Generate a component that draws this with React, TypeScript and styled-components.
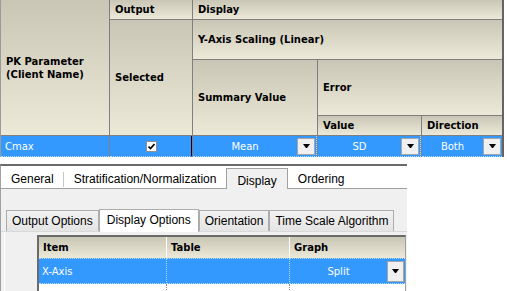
import styled, { createGlobalStyle } from "styled-components";

const GlobalStyle = createGlobalStyle`
  body {
    margin: 0;
    background: #ffffff;
  }
`;

const Page = styled.div`
  width: 507px;
  height: 291px;
  overflow: hidden;
  background: #ffffff;
`;

/* ---------- top grid ---------- */

const Grid = styled.div`
  display: grid;
  grid-template-columns: 108px 82px 124px 103px 80px;
  grid-template-rows: 19px 39px 55px 19px 21px;
  gap: 1px;
  width: fit-content;
  background: #7f7f7f;
  border-left: 1px solid #9a9a9a;
  border-right: 2px solid #646464;
  font-family: "DejaVu Sans", Verdana, sans-serif;
  font-size: 10px;
`;

const HeadCell = styled.div<{ $col: string; $row: string }>`
  grid-column: ${(p) => p.$col};
  grid-row: ${(p) => p.$row};
  display: flex;
  align-items: center;
  padding-left: 5px;
  background: linear-gradient(#cac6b6, #ece9d8);
  font-weight: bold;
  color: #000;
  line-height: 13px;
`;

const DataCell = styled.div<{ $divider?: boolean; $center?: boolean }>`
  display: flex;
  align-items: center;
  justify-content: ${(p) => (p.$center ? "center" : "flex-start")};
  padding-left: ${(p) => (p.$center ? "0" : "4px")};
  background: #3399ff;
  color: #ffffff;
  border-bottom: 1px dotted #b9dcff;
  ${(p) => p.$divider && "border-right: 1px solid #000;"}
`;

const Check = styled.span`
  width: 11px;
  height: 11px;
  box-sizing: border-box;
  border: 1px solid #8e8f8f;
  background: #ffffff;
  display: flex;
  align-items: center;
  justify-content: center;
  margin-left: 2px;
`;

const Combo = styled.div<{ $inner?: boolean }>`
  display: flex;
  align-items: center;
  background: #3399ff;
  color: #ffffff;
  padding-right: 1px;
  border-bottom: 1px dotted #b9dcff;
  border-right: ${(p) => (p.$inner ? "1px dotted #b9dcff" : "none")};
`;

const ComboText = styled.span`
  flex: 1;
  text-align: center;
`;

const DropButton = styled.span<{ $w: number; $h: number }>`
  width: ${(p) => p.$w}px;
  height: ${(p) => p.$h}px;
  box-sizing: border-box;
  border: 1px solid #a5a5a5;
  background: #f0f0f0;
  display: flex;
  align-items: center;
  justify-content: center;

  &::after {
    content: "";
    width: 1px;
    border-left: 3px solid transparent;
    border-right: 3px solid transparent;
    border-top: 4px solid #000;
  }
`;

/* ---------- tab control ---------- */

const TabControl = styled.div`
  width: 407px;
  margin-top: 7px;
  border-top: 2px solid #6b6b6b;
  border-left: 1px solid #a0a0a0;
  box-sizing: border-box;
  font-family: "Liberation Sans", Arial, sans-serif;
  font-size: 12px;
  color: #000;
`;

const TabStrip = styled.div`
  display: flex;
  align-items: flex-end;
  height: 22px;
  background: #ffffff;
  border-bottom: 1px solid #a0a0a0;
`;

const Tab = styled.div<{ $active?: boolean; $sep?: boolean }>`
  position: relative;
  height: ${(p) => (p.$active ? "21px" : "22px")};
  box-sizing: border-box;
  padding: 3px 10px 0;
  display: flex;
  align-items: center;
  background: ${(p) => (p.$active ? "#f0f0f0" : "transparent")};
  border: ${(p) => (p.$active ? "1px solid #a0a0a0" : "none")};
  border-bottom: none;
  margin-bottom: ${(p) => (p.$active ? "-1px" : "0")};

  ${(p) =>
    p.$sep &&
    `&::after {
      content: "";
      position: absolute;
      right: 0;
      top: 6px;
      height: 15px;
      border-right: 1px solid #c8c8c8;
    }`}
`;

const Body = styled.div`
  height: 102px;
  background: #f0f0f0;
`;

const SubStrip = styled.div`
  display: flex;
  align-items: flex-end;
  height: 42px;
  padding-left: 5px;
  border-bottom: 1px solid #d9d9d9;
`;

const SubTab = styled.div<{ $active?: boolean }>`
  height: ${(p) => (p.$active ? "23px" : "21px")};
  box-sizing: border-box;
  padding: 0 ${(p) => (p.$active ? "7px" : "5px")};
  display: flex;
  align-items: center;
  padding-bottom: ${(p) => (p.$active ? "3px" : "0")};
  border: 1px solid #acacac;
  border-bottom: none;
  margin-bottom: ${(p) => (p.$active ? "-1px" : "0")};
  background: ${(p) =>
    p.$active ? "#ffffff" : "linear-gradient(#f2f2f2, #e4e4e4)"};
  & + & {
    border-left: ${(p) => (p.$active ? "1px solid #acacac" : "none")};
  }
`;

const SubPanel = styled.div`
  margin-left: 3px;
  padding: 3px 0 0 32px;
  border-left: 1px solid #ffffff;
`;

const ItemGrid = styled.div`
  display: grid;
  grid-template-columns: 128px 123px 115px;
  grid-template-rows: 21px 26px 10px;
  width: fit-content;
  background: #ffffff;
  border-top: 2px solid #6b6b6b;
  border-left: 2px solid #6b6b6b;
  border-right: 1px solid #a0a0a0;
  font-family: "DejaVu Sans", Verdana, sans-serif;
  font-size: 10px;
`;

const ItemHead = styled.div<{ $last?: boolean }>`
  display: flex;
  align-items: center;
  padding-left: 4px;
  font-weight: bold;
  background: linear-gradient(#cac6b6, #ece9d8);
  border-right: ${(p) => (p.$last ? "none" : "1px solid #ffffff")};
`;

const ItemCell = styled.div<{ $last?: boolean }>`
  display: flex;
  align-items: center;
  padding-left: 3px;
  background: #3399ff;
  color: #ffffff;
  border-top: 1px dotted #b9dcff;
  border-bottom: 1px dotted #b9dcff;
  border-right: ${(p) => (p.$last ? "none" : "1px dotted #b9dcff")};
`;

const ItemCombo = styled(ItemCell)`
  padding-left: 0;
  padding-right: 1px;
`;

const EmptyCell = styled.div<{ $last?: boolean }>`
  border-right: ${(p) => (p.$last ? "none" : "1px dotted #8a8a8a")};
`;

export default function App() {
  return (
    <Page>
      <GlobalStyle />
      <Grid>
        <HeadCell $col="1" $row="1 / 5">
          PK Parameter
          <br />
          (Client Name)
        </HeadCell>
        <HeadCell $col="2" $row="1">
          Output
        </HeadCell>
        <HeadCell $col="3 / 6" $row="1">
          Display
        </HeadCell>
        <HeadCell $col="2" $row="2 / 5">
          Selected
        </HeadCell>
        <HeadCell $col="3 / 6" $row="2">
          Y-Axis Scaling (Linear)
        </HeadCell>
        <HeadCell $col="3" $row="3 / 5">
          Summary Value
        </HeadCell>
        <HeadCell $col="4 / 6" $row="3">
          Error
        </HeadCell>
        <HeadCell $col="4" $row="4">
          Value
        </HeadCell>
        <HeadCell $col="5" $row="4">
          Direction
        </HeadCell>

        <DataCell>Cmax</DataCell>
        <DataCell $center $divider>
          <Check>
            <svg width="7" height="7" viewBox="0 0 7 7">
              <path d="M0.5 3.5 L2.5 5.5 L6.5 1" stroke="#000" strokeWidth="1.7" fill="none" />
            </svg>
          </Check>
        </DataCell>
        <Combo $inner>
          <ComboText>Mean</ComboText>
          <DropButton $w={18} $h={17} />
        </Combo>
        <Combo $inner>
          <ComboText>SD</ComboText>
          <DropButton $w={18} $h={17} />
        </Combo>
        <Combo>
          <ComboText>Both</ComboText>
          <DropButton $w={18} $h={17} />
        </Combo>
      </Grid>

      <TabControl>
        <TabStrip>
          <Tab $sep>General</Tab>
          <Tab>Stratification/Normalization</Tab>
          <Tab $active>Display</Tab>
          <Tab>Ordering</Tab>
        </TabStrip>
        <Body>
          <SubStrip>
            <SubTab>Output Options</SubTab>
            <SubTab $active>Display Options</SubTab>
            <SubTab>Orientation</SubTab>
            <SubTab>Time Scale Algorithm</SubTab>
          </SubStrip>
          <SubPanel>
            <ItemGrid>
              <ItemHead>Item</ItemHead>
              <ItemHead>Table</ItemHead>
              <ItemHead $last>Graph</ItemHead>

              <ItemCell>X-Axis</ItemCell>
              <ItemCell />
              <ItemCombo $last>
                <ComboText>Split</ComboText>
                <DropButton $w={17} $h={21} />
              </ItemCombo>

              <EmptyCell />
              <EmptyCell />
              <EmptyCell $last />
            </ItemGrid>
          </SubPanel>
        </Body>
      </TabControl>
    </Page>
  );
}
